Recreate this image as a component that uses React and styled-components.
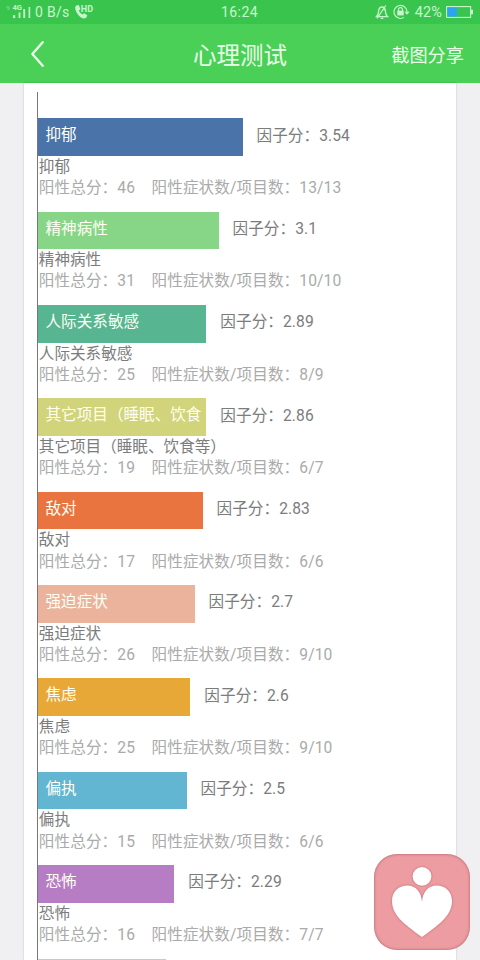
import React from 'react';
import styled, { createGlobalStyle } from 'styled-components';

const GlobalStyle = createGlobalStyle`
  * {
    box-sizing: border-box;
  }

  body {
    margin: 0;
    background: #f0f0f2;
    font-family: Roboto, 'Noto Sans CJK SC', sans-serif;
  }
`;

const Screen = styled.div`
  position: relative;
  display: flex;
  flex-direction: column;
  width: 480px;
  height: 960px;
  overflow: hidden;
  background: #f0f0f2;
`;

const StatusBar = styled.div`
  display: grid;
  grid-template-columns: 1fr auto 1fr;
  align-items: center;
  flex: none;
  height: 24px;
  padding: 0 7px 0 5px;
  background: #39c54d;
  color: #c8f6cc;
  line-height: 24px;
`;

const StatusGroup = styled.div`
  display: flex;
  align-items: center;
  justify-content: ${props => (props.$end ? 'flex-end' : 'flex-start')};
  height: 24px;
`;

const Speed = styled.span`
  margin: 0 5px 0 3px;
  font-size: 14px;
  letter-spacing: 0.3px;
`;

const Clock = styled.span`
  padding-left: 1px;
  font-size: 14px;
  letter-spacing: 0.4px;
`;

const Percent = styled.span`
  margin: 0 4px 0 5px;
  padding-top: 1px;
  font-size: 14.5px;
  letter-spacing: 0.1px;
`;

const Header = styled.header`
  display: grid;
  grid-template-columns: 1fr auto 1fr;
  align-items: center;
  flex: none;
  height: 59px;
  padding: 0 16px 0 28px;
  background: #4ad057;
  color: #e9ffe9;
`;

const BackButton = styled.button`
  display: flex;
  width: 20px;
  padding: 0;
  border: 0;
  background: none;
  color: inherit;
`;

const Title = styled.h1`
  margin: 4px 12px 0 0;
  font-size: 23.5px;
  font-weight: 400;
  line-height: 32px;
`;

const ShareButton = styled.button`
  justify-self: end;
  padding: 5px 0 0;
  border: 0;
  background: none;
  color: inherit;
  font: inherit;
  font-size: 18.2px;
  line-height: 28px;
`;

const Card = styled.main`
  flex: 1;
  min-height: 0;
  width: 432px;
  margin: 0 auto;
  padding: 9px 0 0 13px;
  overflow: hidden;
  background: #fff;
  box-shadow: 0 0 2px rgba(0, 0, 0, 0.2);
`;

const Chart = styled.div`
  padding-top: 26.3px;
  border-left: 1px solid #777;
`;

const Item = styled.section`
  height: 93.37px;
`;

const BarRow = styled.div`
  display: flex;
  align-items: center;
  height: 37.5px;
`;

const Bar = styled.div`
  flex: none;
  height: 100%;
  padding-left: 7.5px;
  color: #fffff4;
  font-size: 15.6px;
  line-height: 34px;
  white-space: nowrap;
`;

const Score = styled.div`
  margin-left: 14px;
  padding-bottom: 3px;
  color: #7c7c7c;
  font-size: 15.6px;
  letter-spacing: 0.08px;
  line-height: 32px;
`;

const Description = styled.div`
  padding: 1px 0 0 0.8px;
  font-size: 15.6px;
  line-height: 21.3px;
  white-space: nowrap;
`;

const Name = styled.div`
  color: #7c7c7c;
`;

const Detail = styled.div`
  display: flex;
  gap: 16.5px;
  color: #aaa;
  letter-spacing: 0.1px;
`;

const FloatingButton = styled.button`
  position: absolute;
  right: 10px;
  bottom: 10px;
  width: 96px;
  height: 96px;
  padding: 0;
  border: 0;
  border-radius: 23px;
  background: #ed9ca1;
  box-shadow: inset 0 0 3px rgba(120, 50, 60, 0.6);
`;

const factors = [
  { name: '抑郁', score: '3.54', total: 46, count: '13/13', width: 204.5, color: '#4a73aa' },
  { name: '精神病性', score: '3.1', total: 31, count: '10/10', width: 180.5, color: '#87d687' },
  { name: '人际关系敏感', score: '2.89', total: 25, count: '8/9', width: 168.3, color: '#58b592' },
  {
    name: '其它项目（睡眠、饮食等）',
    label: '其它项目（睡眠、饮食',
    score: '2.86',
    total: 19,
    count: '6/7',
    width: 168.3,
    color: '#d2d47b',
  },
  { name: '敌对', score: '2.83', total: 17, count: '6/6', width: 164.5, color: '#e9743f' },
  { name: '强迫症状', score: '2.7', total: 26, count: '9/10', width: 156.5, color: '#ebb39c' },
  { name: '焦虑', score: '2.6', total: 25, count: '9/10', width: 152.3, color: '#e8a838' },
  { name: '偏执', score: '2.5', total: 15, count: '6/6', width: 148.5, color: '#62b6d2' },
  { name: '恐怖', score: '2.29', total: 16, count: '7/7', width: 136.3, color: '#b67dc4' },
  { name: '', score: '', width: 128.3, color: '#d2d47b' },
];

const SignalIcon = () => (
  <svg width="27" height="20" viewBox="0 0 27 20" fill="currentColor">
    <path d="M1 6l2-2v4M4 4v4" fill="none" stroke="currentColor" strokeWidth="0.8" opacity="0.4" />
    <text x="7.5" y="8.3" fontSize="7.6" fontWeight="700">4G</text>
    <path d="M8 13.2h2.2V16H8zM13.6 10.5h1.8V16h-1.8zM18.3 7h1.8v9h-1.8zM23.6 5h1.6v11h-1.6z" />
  </svg>
);

const CallIcon = () => (
  <svg width="20" height="20" viewBox="0 0 20 20" fill="currentColor">
    <path d="M1.2 3.6l2.6-.6 1.6 4.2-1.6 1.4c.8 1.8 2.1 3.2 3.8 4l1.5-1.4 3.2 2.1c-.5 2.2-1.8 3.4-3.7 3.2C4.6 15.9-.2 9.4.2 5z" />
    <text x="5.8" y="10.4" fontSize="9" fontWeight="700">HD</text>
  </svg>
);

const MuteIcon = () => (
  <svg width="14" height="16" viewBox="0 0 14 16" fill="none" stroke="currentColor" strokeWidth="1.3">
    <path d="M1.4 12.6c1.6-1.5 2.1-3.2 2.2-5.2C3.8 4.7 5.1 3 7 3s3.2 1.7 3.4 4.4c.1 2 .6 3.7 2.2 5.2zM5.7 14.4h2.6M10.8 1.5L2 14.5" />
  </svg>
);

const RotationLockIcon = () => (
  <svg width="17" height="16" viewBox="0 0 17 16" fill="none" stroke="currentColor" strokeWidth="1.1">
    <path d="M11 13.4A6.5 6.5 0 1 1 14 8.3" />
    <path d="M5.5 7V5.6a2 2 0 0 1 4 0V7" />
    <path d="M4.3 6.6h6.4v4.8H4.3z" fill="currentColor" stroke="none" />
    <path d="M11.4 7.8h5.2L14 10.8z" fill="currentColor" stroke="none" />
  </svg>
);

const BatteryIcon = () => (
  <svg width="27" height="12" viewBox="0 0 27 12">
    <rect x="0.6" y="0.6" width="24" height="10.8" fill="none" stroke="currentColor" strokeWidth="1.1" />
    <rect x="1.5" y="1.5" width="9.5" height="9" fill="#2aa4f5" />
    <path d="M25 3.8h2v4.4h-2z" fill="currentColor" />
  </svg>
);

const BackIcon = () => (
  <svg width="20" height="28" viewBox="0 0 20 28" fill="none" stroke="currentColor" strokeWidth="2.4" strokeLinecap="round" strokeLinejoin="round">
    <path d="M14.7 2.2L4.4 14l10.3 11.8" />
  </svg>
);

const HeartShape = styled.g`
  filter: drop-shadow(0.5px 0.5px 1px rgba(150, 60, 70, 0.6));
`;

const HeartIcon = () => (
  <svg width="96" height="96" viewBox="0 0 96 96" fill="#fff">
    <HeartShape>
      <circle cx="48" cy="22.3" r="9.4" />
      <path d="M48 48C47.6 38 41.5 31.5 33.5 31.5C24 31.5 18 38 18 47C18 60 28 69 48 83C68 69 78 60 78 47C78 38 72 31.5 62.5 31.5C54.5 31.5 48.4 38 48 48Z" />
    </HeartShape>
  </svg>
);

const FactorItem = ({ factor }) => (
  <Item>
    <BarRow>
      <Bar style={{ width: factor.width, backgroundColor: factor.color }}>
        {factor.label || factor.name}
      </Bar>
      {factor.score && <Score>因子分：{factor.score}</Score>}
    </BarRow>
    {factor.name && (
      <Description>
        <Name>{factor.name}</Name>
        <Detail>
          <span>阳性总分：{factor.total}</span>
          <span>阳性症状数/项目数：{factor.count}</span>
        </Detail>
      </Description>
    )}
  </Item>
);

const App = () => (
  <>
    <GlobalStyle />
    <Screen>
      <StatusBar>
        <StatusGroup>
          <SignalIcon />
          <Speed>0 B/s</Speed>
          <CallIcon />
        </StatusGroup>
        <Clock>16:24</Clock>
        <StatusGroup $end>
          <MuteIcon />
          <span>&nbsp;</span>
          <RotationLockIcon />
          <Percent>42%</Percent>
          <BatteryIcon />
        </StatusGroup>
      </StatusBar>
      <Header>
        <BackButton aria-label="返回">
          <BackIcon />
        </BackButton>
        <Title>心理测试</Title>
        <ShareButton>截图分享</ShareButton>
      </Header>
      <Card>
        <Chart>
          {factors.map((factor, index) => (
            <FactorItem key={index} factor={factor} />
          ))}
        </Chart>
      </Card>
      <FloatingButton aria-label="心理测试">
        <HeartIcon />
      </FloatingButton>
    </Screen>
  </>
);

export default App;
